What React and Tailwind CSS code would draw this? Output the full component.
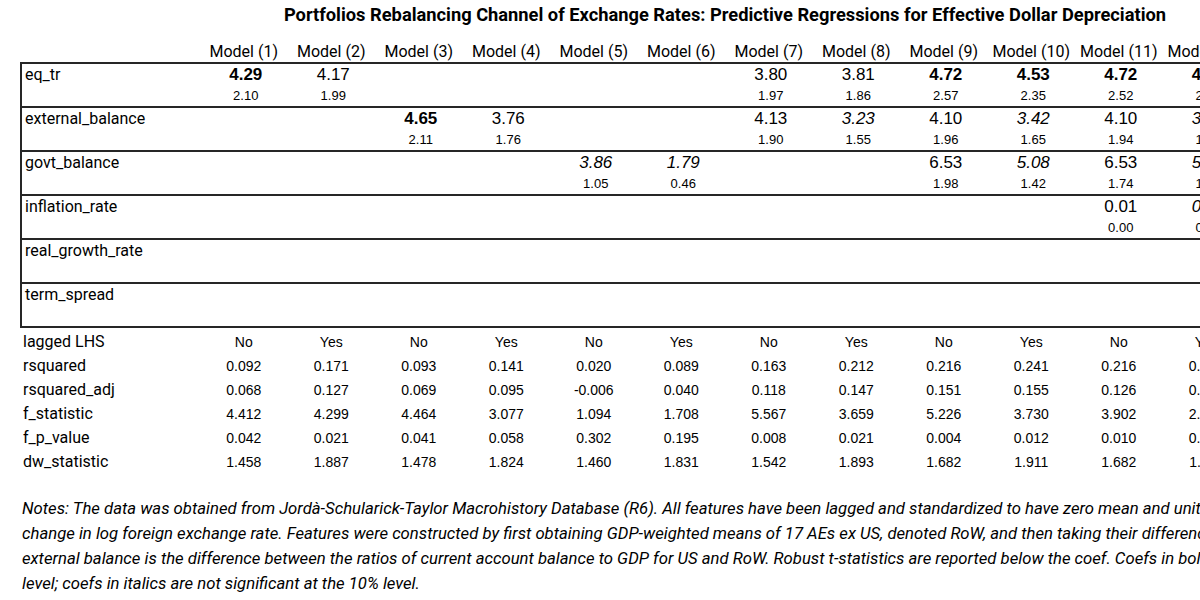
const MODELS = Array.from({ length: 14 }, (_, i) => `Model (${i + 1})`);

// [coef, tstat, style] - style: b = bold (5%), i = italic (not significant)
const coefRows = [
  {
    label: 'eq_tr',
    cells: [
      ['4.29', '2.10', 'b'], ['4.17', '1.99'], null, null, null, null,
      ['3.80', '1.97'], ['3.81', '1.86'], ['4.72', '2.57', 'b'], ['4.53', '2.35', 'b'],
      ['4.72', '2.52', 'b'], ['4.55', '2.38', 'b'], ['4.70', '2.49', 'b'], ['4.51', '2.31', 'b'],
    ],
  },
  {
    label: 'external_balance',
    cells: [
      null, null, ['4.65', '2.11', 'b'], ['3.76', '1.76'], null, null,
      ['4.13', '1.90'], ['3.23', '1.55', 'i'], ['4.10', '1.96'], ['3.42', '1.65', 'i'],
      ['4.10', '1.94'], ['3.44', '1.66', 'i'], ['4.02', '1.91'], ['3.38', '1.61', 'i'],
    ],
  },
  {
    label: 'govt_balance',
    cells: [
      null, null, null, null, ['3.86', '1.05', 'i'], ['1.79', '0.46', 'i'],
      null, null, ['6.53', '1.98'], ['5.08', '1.42', 'i'],
      ['6.53', '1.74'], ['5.10', '1.40', 'i'], ['6.48', '1.71'], ['5.02', '1.37', 'i'],
    ],
  },
  {
    label: 'inflation_rate',
    cells: [
      null, null, null, null, null, null, null, null, null, null,
      ['0.01', '0.00'], ['0.01', '0.00', 'i'], ['0.02', '0.01', 'i'], ['0.01', '0.00', 'i'],
    ],
  },
  { label: 'real_growth_rate', cells: [] },
  { label: 'term_spread', cells: [] },
];

const statRows = [
  { label: 'lagged LHS', values: ['No', 'Yes', 'No', 'Yes', 'No', 'Yes', 'No', 'Yes', 'No', 'Yes', 'No', 'Yes', 'No', 'Yes'] },
  { label: 'rsquared', values: ['0.092', '0.171', '0.093', '0.141', '0.020', '0.089', '0.163', '0.212', '0.216', '0.241', '0.216', '0.241', '0.219', '0.244'] },
  { label: 'rsquared_adj', values: ['0.068', '0.127', '0.069', '0.095', '-0.006', '0.040', '0.118', '0.147', '0.151', '0.155', '0.126', '0.129', '0.117', '0.120'] },
  { label: 'f_statistic', values: ['4.412', '4.299', '4.464', '3.077', '1.094', '1.708', '5.567', '3.659', '5.226', '3.730', '3.902', '2.987', '3.126', '2.541'] },
  { label: 'f_p_value', values: ['0.042', '0.021', '0.041', '0.058', '0.302', '0.195', '0.008', '0.021', '0.004', '0.012', '0.010', '0.018', '0.014', '0.026'] },
  { label: 'dw_statistic', values: ['1.458', '1.887', '1.478', '1.824', '1.460', '1.831', '1.542', '1.893', '1.682', '1.911', '1.682', '1.911', '1.690', '1.915'] },
];

const notes = [
  'Notes: The data was obtained from Jordà-Schularick-Taylor Macrohistory Database (R6). All features have been lagged and standardized to have zero mean and unit variance. The target is the',
  'change in log foreign exchange rate. Features were constructed by first obtaining GDP-weighted means of 17 AEs ex US, denoted RoW, and then taking their differences.',
  'external balance is the difference between the ratios of current account balance to GDP for US and RoW. Robust t-statistics are reported below the coef. Coefs in bold are significant at the 5%',
  'level; coefs in italics are not significant at the 10% level.',
];

const GRID = 'grid grid-cols-[180px_repeat(14,87.5px)]';
const LABEL_FONT = "font-['Roboto',sans-serif]";
const NUM_FONT = "font-['Liberation_Sans',Arial,sans-serif]";

const CoefCell = ({ cell }) => {
  if (!cell) return <div />;
  const [coef, tstat, style] = cell;
  return (
    <div className={`flex flex-col items-center ${NUM_FONT}`}>
      <span
        className={`text-[17px] leading-[22px] ${style === 'b' ? 'font-bold' : ''} ${style === 'i' ? 'italic' : ''}`}
      >
        {coef}
      </span>
      <span className="text-[13px] leading-[20px]">{tstat}</span>
    </div>
  );
};

export default function App() {
  return (
    <div className="w-[1200px] h-[600px] overflow-hidden bg-white text-black">
      <div className="w-[1430px] pl-[20px]">
        {/* Titre */}
        <div className={`w-[1410px] text-center text-[18.3px] leading-[30px] font-bold ${LABEL_FONT}`}>
          Portfolios Rebalancing Channel of Exchange Rates: Predictive Regressions for Effective Dollar Depreciation
        </div>

        {/* En-têtes */}
        <div className={`${GRID} h-[32px] pt-[12px] ${LABEL_FONT}`}>
          <div />
          {MODELS.map(m => (
            <div key={m} className="text-center text-[16px] leading-[20px] whitespace-nowrap">
              {m}
            </div>
          ))}
        </div>

        {/* Coefficients */}
        <div className="border-l-2 border-b-2 border-[#262626]">
          {coefRows.map(row => (
            <div key={row.label} className={`${GRID} h-[44px] border-t-2 border-[#262626]`}>
              <div className={`pl-[3px] text-[16px] leading-[22px] ${LABEL_FONT}`}>{row.label}</div>
              {MODELS.map((m, i) => (
                <CoefCell key={m} cell={row.cells[i]} />
              ))}
            </div>
          ))}
        </div>

        {/* Statistiques */}
        <div className="pt-[2px]">
          {statRows.map(row => (
            <div key={row.label} className={`${GRID} h-[24px] items-center`}>
              <div className={`pl-[3px] text-[16px] leading-[24px] ${LABEL_FONT}`}>{row.label}</div>
              {row.values.map((v, i) => (
                <div key={i} className={`text-center text-[14px] leading-[24px] ${NUM_FONT}`}>
                  {v}
                </div>
              ))}
            </div>
          ))}
        </div>

        {/* Notes */}
        <div className={`mt-[22px] pl-[2px] italic text-[16.7px] leading-[25px] ${LABEL_FONT}`}>
          {notes.map((line, i) => (
            <div key={i} className="whitespace-nowrap">{line}</div>
          ))}
        </div>
      </div>
    </div>
  );
}
